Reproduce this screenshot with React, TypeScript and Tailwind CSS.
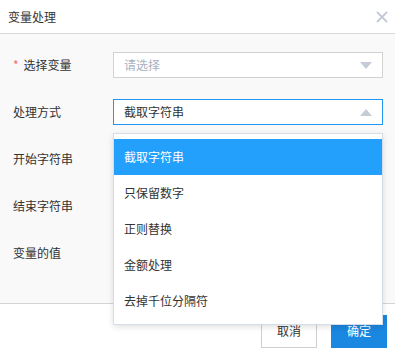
import React from "react";

const font = { fontFamily: '"Noto Sans CJK SC", "Noto Sans", sans-serif' };

function Row({ label, required, children }: { label: string; required?: boolean; children?: React.ReactNode }) {
  return (
    <div className="flex items-center h-[26px]">
      <div className="w-[113px] pl-[13px] text-[12px] text-[#333] flex items-center">
        {required && <span className="text-[#f56c6c] mr-[5px]">*</span>}
        {label}
      </div>
      <div className="w-[270px]">{children}</div>
    </div>
  );
}

export default function App() {
  const items = ["截取字符串", "只保留数字", "正则替换", "金额处理", "去掉千位分隔符"];
  return (
    <div className="w-[395px] h-[358px] bg-white relative overflow-hidden" style={font}>
      <div className="h-[34px] flex items-center justify-between pl-[8px] pr-[7px] border-b border-[#d9d9d9] bg-white">
        <span className="text-[12px] text-[#333]">变量处理</span>
        <svg width="12" height="12" viewBox="0 0 12 12">
          <path d="M1 1L11 11M11 1L1 11" stroke="#c3cad6" strokeWidth="1.8" />
        </svg>
      </div>
      <div className="h-[270px] bg-[#f9f9f9] pt-[18px] flex flex-col gap-[21px] border-b border-[#d4d4d4]">
        <Row label="选择变量" required>
          <div className="h-[26px] border border-[#d2d2d2] bg-white flex items-center justify-between pl-[10px] pr-[10px]">
            <span className="text-[12px] text-[#a9b0bf]">请选择</span>
            <svg width="12" height="7" viewBox="0 0 12 7"><path d="M0 0H12L6 7Z" fill="#c5ccd8" /></svg>
          </div>
        </Row>
        <Row label="处理方式">
          <div className="h-[26px] border border-[#2196f3] bg-white flex items-center justify-between pl-[10px] pr-[10px]">
            <span className="text-[12px] text-[#333]">截取字符串</span>
            <svg width="12" height="7" viewBox="0 0 12 7"><path d="M0 7H12L6 0Z" fill="#c5ccd8" /></svg>
          </div>
        </Row>
        <Row label="开始字符串" />
        <Row label="结束字符串" />
        <Row label="变量的值" />
      </div>
      <div className="h-[54px] flex items-center justify-end pr-[8px] gap-[14px]">
        <button className="w-[56px] h-[33px] border border-[#cfcfcf] bg-white text-[12px] text-[#333]">取消</button>
        <button className="w-[56px] h-[33px] bg-[#1a87e0] text-[12px] text-white">确定</button>
      </div>
      <div className="absolute left-[113px] top-[133px] w-[270px] bg-white border border-[#d6dde8] shadow-[0_2px_6px_rgba(0,0,0,0.12)] pt-[5px] pb-[5px]">
        {items.map((it, i) => (
          <div
            key={it}
            className={
              i === 0
                ? "h-[36px] flex items-center pl-[10px] text-[12px] bg-[#22a0fb] text-white"
                : "h-[36px] flex items-center pl-[10px] text-[12px] text-[#333]"
            }
          >
            {it}
          </div>
        ))}
      </div>
    </div>
  );
}
